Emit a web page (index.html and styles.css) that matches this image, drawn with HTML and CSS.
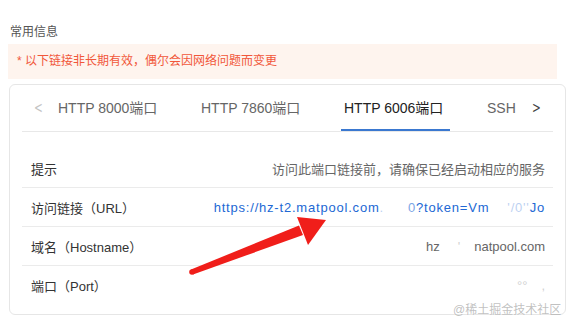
FILE: index.html
```html
<!DOCTYPE html>
<html lang="zh-CN">
<head>
    <meta charset="UTF-8">
    <meta name="viewport" content="width=device-width, initial-scale=1.0">
    <title>常用信息</title>
    <link rel="stylesheet" href="styles.css">
</head>
<body>
    <div class="page">
        <div class="section-title">常用信息</div>
        <div class="alert">* 以下链接非长期有效，偶尔会因网络问题而变更</div>

        <div class="card">
            <div class="tabs">
                <span class="tab-arrow prev">&lt;</span>
                <div class="tab-list">
                    <div class="tab">HTTP 8000端口</div>
                    <div class="tab">HTTP 7860端口</div>
                    <div class="tab active">HTTP 6006端口</div>
                    <div class="tab">SSH</div>
                </div>
                <span class="tab-arrow next">&gt;</span>
            </div>

            <div class="rows">
                <div class="row">
                    <span class="label">提示</span>
                    <span class="value">访问此端口链接前，请确保已经启动相应的服务</span>
                </div>
                <div class="row">
                    <span class="label">访问链接（URL）</span>
                    <span class="value link">https://hz-t2.matpool.com<span class="ghost">.</span><span class="blank" style="width:24px"></span><span class="half">0</span>?token=Vm<span class="blank" style="width:18px"></span><span class="ghost">'/0''</span>Jo</span>
                </div>
                <div class="row">
                    <span class="label">域名（Hostname）</span>
                    <span class="value">hz<span class="blank" style="width:18px"></span><span class="ghost">'</span><span class="blank" style="width:14px"></span>natpool.com</span>
                </div>
                <div class="row">
                    <span class="label">端口（Port）</span>
                    <span class="value"><span class="ghost">°°</span><span class="blank" style="width:14px"></span><span class="ghost">,</span></span>
                </div>
            </div>
        </div>
    </div>

    <svg class="annotation" viewBox="0 0 572 328" width="572" height="328">
        <polygon points="193,274.5 191,269.5 299,225.5 303,235" fill="#f01e1a"/>
        <circle cx="192" cy="272" r="2.8" fill="#f01e1a"/>
        <polygon points="297,217 326,220 308,245" fill="#f01e1a"/>
    </svg>

    <div class="watermark">@稀土掘金技术社区</div>
</body>
</html>
```

FILE: styles.css
```css
body {
    margin: 0;
    font-family: "Liberation Sans", "Noto Sans CJK SC", sans-serif;
    color: #333;
    background: #fff;
    width: 572px;
    height: 328px;
    overflow: hidden;
}
.page {
    padding: 24px 0 0 8px;
}
.section-title {
    font-size: 12px;
    line-height: 16px;
    color: #555;
    padding-left: 2px;
    margin-bottom: 4px;
}
.alert {
    width: 540px;
    height: 35px;
    line-height: 35px;
    padding-left: 9px;
    background: #fef4ee;
    color: #f1573a;
    font-size: 12px;
}
.card {
    margin: 5px 0 0 1px;
    width: 531px;
    padding: 0 12px 10px 12px;
    border: 1px solid #e6e6e6;
    border-radius: 6px;
}
.tabs {
    display: flex;
    height: 46px;
    border-bottom: 1px solid #e8e8e8;
}
.tab-arrow {
    width: 33px;
    flex: none;
    text-align: center;
    line-height: 46px;
    font-size: 15px;
    font-family: "DejaVu Sans", sans-serif;
    transform: scaleX(0.7);
}
.tab-arrow.prev {
    color: #c4c4c4;
}
.tab-arrow.next {
    color: #444;
}
.tab-list {
    flex: 1;
    display: flex;
    gap: 34px;
    overflow: hidden;
}
.tab {
    flex: none;
    width: 106px;
    padding-left: 3px;
    line-height: 46px;
    font-size: 14px;
    color: #666;
    position: relative;
}
.tab.active {
    color: #222;
}
.tab.active::after {
    content: "";
    position: absolute;
    left: 0;
    right: 0;
    bottom: 0;
    height: 2px;
    background: #3a78d0;
}
.rows {
    margin-top: 17px;
}
.row {
    display: flex;
    justify-content: space-between;
    align-items: center;
    height: 38px;
    padding: 0 8px 0 9px;
    border-bottom: 1px solid #ebebeb;
    font-size: 13px;
}
.row:last-child {
    border-bottom: none;
}
.label {
    color: #333;
}
.value {
    color: #666;
    white-space: nowrap;
}
.value.link {
    color: #2268d4;
    letter-spacing: 0.8px;
}
.blank {
    display: inline-block;
}
.ghost {
    opacity: 0.3;
}
.half {
    opacity: 0.6;
}
.annotation {
    position: absolute;
    left: 0;
    top: 0;
    pointer-events: none;
}
.watermark {
    position: absolute;
    left: 453px;
    top: 302px;
    font-size: 12px;
    line-height: 16px;
    color: rgba(140, 140, 140, 0.55);
    text-shadow: 0 0 1px #fff;
}
```
